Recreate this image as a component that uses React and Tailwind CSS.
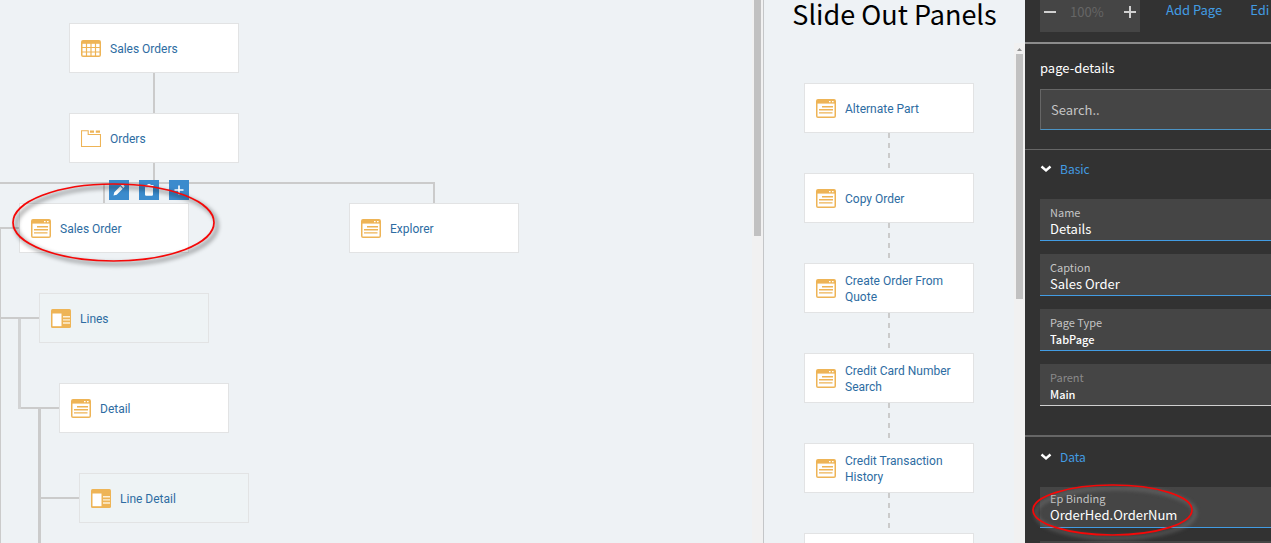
import React, { useState } from 'react';

const AMBER = '#eeb456';

const WindowIcon = () => (
  <svg width="20" height="19" viewBox="0 0 20 19" fill="none" className="shrink-0">
    <rect x="0.75" y="0.75" width="18.5" height="17.5" rx="1.25" fill="#fff" stroke={AMBER} strokeWidth="1.5" />
    <path d="M1 1h18v3.6H1z" fill={AMBER} />
    <path d="M13 2h1.6v1.2H13zM16 2h1.6v1.2H16z" fill="#fff" />
    <path d="M6 7.7h11M3 10.8h14M3 13.9h13.5" stroke={AMBER} strokeWidth="1.4" />
  </svg>
);

const SplitIcon = () => (
  <svg width="20" height="19" viewBox="0 0 20 19" fill="none" className="shrink-0">
    <rect width="20" height="19" rx="1.5" fill={AMBER} />
    <path d="M1.5 4.5h9v12.7h-9z" fill="#fff" />
    <path d="M12 7.8h7M12 10.9h7M12 14h7" stroke="#fdf0d6" strokeWidth="1.4" />
  </svg>
);

const GridIcon = () => (
  <svg width="20" height="17" viewBox="0 0 20 17" fill="none" className="shrink-0">
    <rect x="0.75" y="0.75" width="18.5" height="15.5" rx="1.25" fill="#fff" stroke={AMBER} strokeWidth="1.5" />
    <path d="M1 1h18v2.8H1z" fill={AMBER} />
    <path d="M5.5 3v13M10 3v13M14.5 3v13M1 7.5h18M1 12h18" stroke={AMBER} strokeWidth="1.2" />
  </svg>
);

const TabsIcon = () => (
  <svg width="20" height="17" viewBox="0 0 20 17" fill="none" className="shrink-0">
    <path d="M0.5 16.5V0.8h6.7v3.7h12.3v12z" stroke={AMBER} strokeWidth="1.1" />
    <path d="M9 0.5h4v2.2H9zM14.8 0.5h4.2v2.2h-4.2z" fill={AMBER} />
  </svg>
);

const icons = { window: WindowIcon, split: SplitIcon, grid: GridIcon, tabs: TabsIcon };

const nodes = [
  { label: 'Sales Orders', icon: 'grid', x: 69, y: 23 },
  { label: 'Orders', icon: 'tabs', x: 69, y: 113 },
  { label: 'Sales Order', icon: 'window', x: 19, y: 203 },
  { label: 'Explorer', icon: 'window', x: 349, y: 203 },
  { label: 'Lines', icon: 'split', x: 39, y: 293, muted: true },
  { label: 'Detail', icon: 'window', x: 59, y: 383 },
  { label: 'Line Detail', icon: 'split', x: 79, y: 473, muted: true },
];

// The last card is still unnamed
const slideOuts = [
  'Alternate Part',
  'Copy Order',
  'Create Order From Quote',
  'Credit Card Number Search',
  'Credit Transaction History',
  '',
];

const Card = ({ label, icon = 'window', muted }) => {
  const Icon = icons[icon];
  return (
    <button
      className={`flex h-[50px] w-[170px] shrink-0 items-center gap-[9px] border border-[#e2e3e4] pl-[11px] pr-3 text-left text-xs leading-4 text-[#2d6ca2] ${
        muted ? 'bg-[#eef3f5]' : 'bg-white'
      }`}
    >
      <Icon />
      <span className="pt-0.5">{label}</span>
    </button>
  );
};

// Red marker ring with a soft shadow
const Ring = ({ width, height, shadow }) => (
  <svg width={width + 20} height={height + 20} fill="none" className="overflow-visible">
    <ellipse
      cx={width / 2 + 3}
      cy={height / 2 + 3}
      rx={width / 2 - 1}
      ry={height / 2 - 1}
      stroke={shadow}
      strokeWidth="3"
      style={{ filter: 'blur(2px)' }}
    />
    <ellipse cx={width / 2} cy={height / 2} rx={width / 2 - 1} ry={height / 2 - 1} stroke="#f50808" strokeWidth="1.7" />
  </svg>
);

const Canvas = () => (
  <main className="relative min-w-0 flex-1 overflow-hidden bg-[#eef2f5] font-[Roboto,sans-serif]">
    <svg className="absolute inset-0 h-full w-full" fill="none" stroke="#cbcbcb" strokeWidth="2">
      <path d="M154 73v40M154 163v19M0 183h434v20M104 184v19" />
      <path d="M0 228h19M0 318h39M20 408h39M40 498h39" />
      <path d="M0.5 227v900" strokeWidth="1" />
      <path d="M19.5 319v90" stroke="#d2d3d4" strokeWidth="3" />
      <path d="M39.5 409v900" strokeWidth="3" />
    </svg>

    {nodes.map((node) => (
      <div key={node.label} className="absolute" style={{ left: node.x, top: node.y }}>
        <Card {...node} />
      </div>
    ))}

    <div className="absolute left-[109px] top-[180px] flex gap-2.5">
      <button aria-label="Edit" className="flex size-5 items-center justify-center bg-[#3b8bcd]">
        <svg width="12" height="12" viewBox="0 0 12 12" fill="#fff">
          <path d="M0.5 11.5l0.8-3.2 6-6 2.4 2.4-6 6zM8 1.6l1-1q.5-.4 1 0l1.4 1.4q.4.5 0 1l-1 1z" />
        </svg>
      </button>
      <button aria-label="Delete" className="flex size-5 items-center justify-center bg-[#3b8bcd]">
        <svg width="10" height="12" viewBox="0 0 10 12" fill="#fff">
          <path d="M0.5 1h2.7l.7-1h2.2l.7 1h2.7v1.2h-9zM1 3.2h8v7.3q0 1.2-1.2 1.2H2.2Q1 11.7 1 10.5z" />
        </svg>
      </button>
      <button aria-label="Add" className="flex size-5 items-center justify-center bg-[#3b8bcd]">
        <svg width="10" height="10" viewBox="0 0 10 10" stroke="#fff" strokeWidth="1.6">
          <path d="M5 0.5v9M0.5 5h9" />
        </svg>
      </button>
    </div>

    <div className="pointer-events-none absolute left-3 top-[183px]">
      <Ring width={203} height={79} shadow="#00000066" />
    </div>
  </main>
);

const SlideOutPanels = () => (
  <section className="flex w-[262px] shrink-0 flex-col border-l border-[#c4c6c8] bg-[#eef2f5]">
    <h2 className="h-[43px] shrink-0 text-center font-['Noto_Sans_CJK_SC',sans-serif] text-[27px] leading-7 text-black">
      Slide Out Panels
    </h2>
    <div className="flex min-h-0 flex-1">
      <div className="flex min-w-0 flex-1 flex-col items-center overflow-hidden pt-10 font-[Roboto,sans-serif]">
        {slideOuts.map((label) => (
          <React.Fragment key={label}>
            <Card label={label} />
            <svg width="2" height="40" className="shrink-0">
              <path d="M1 0v40" stroke="#cbcbcb" strokeWidth="2" strokeDasharray="5 5" />
            </svg>
          </React.Fragment>
        ))}
      </div>
      <div className="flex w-[11px] shrink-0 flex-col items-center bg-[#f1f1f1]">
        <svg width="5" height="11" viewBox="0 0 5 11" className="shrink-0" fill="#8f8f8f">
          <path d="M0 8l2.5-3 2.5 3z" />
        </svg>
        <div className="h-[49%] w-[7px] bg-[#c1c1c1]" />
      </div>
    </div>
  </section>
);

const Field = ({ id, label, value, kind = 'text', disabled, compact }) => {
  const [current, setCurrent] = useState(value);
  return (
    <div
      className={`flex shrink-0 flex-col border-b bg-[#454545] pl-2.5 ${compact ? 'h-[41px] pt-[3px]' : 'h-[42px] pt-[5px]'} ${
        disabled ? 'border-[#d0d0d0]' : 'border-[#429ce3]'
      }`}
    >
      <label htmlFor={id} className={`text-[11px] leading-4 ${disabled ? 'text-[#8a8a8a]' : 'text-[#c4c4c4]'}`}>
        {label}
      </label>
      {kind === 'select' ? (
        <select
          id={id}
          value={current}
          disabled={disabled}
          onChange={(e) => setCurrent(e.target.value)}
          className="h-[18px] w-full appearance-none bg-transparent text-[11px] font-medium leading-[18px] text-white opacity-100 outline-none"
        >
          <option>{value}</option>
        </select>
      ) : (
        <input
          id={id}
          value={current}
          onChange={(e) => setCurrent(e.target.value)}
          className="h-[18px] w-full bg-transparent text-[13px] leading-[18px] text-white outline-none"
        />
      )}
    </div>
  );
};

const SectionToggle = ({ title }) => (
  <button className="flex h-9 shrink-0 items-center gap-2 pt-0.5 text-left text-[12px] leading-4 text-[#429ce3]">
    <svg width="12" height="8" viewBox="0 0 12 8" fill="none" stroke="#fff" strokeWidth="2.4">
      <path d="M1.5 1.5l4.5 4 4.5-4" />
    </svg>
    {title}
  </button>
);

const Properties = () => (
  <aside className="relative flex w-[246px] shrink-0 flex-col overflow-hidden bg-[#323232] font-['Noto_Sans_CJK_SC',sans-serif]">
    <div className="flex h-11 shrink-0 items-start border-b-2 border-[#8c8c8c] pl-[15px]">
      <div className="flex h-8 w-[100px] shrink-0 items-center gap-3.5 bg-[#454545] pl-1 pb-2">
        <button aria-label="Zoom out">
          <svg width="12" height="12" stroke="#d0d0d0" strokeWidth="2">
            <path d="M0 6h12" />
          </svg>
        </button>
        <span className="text-[13px] leading-4 text-[#666]">100%</span>
        <button aria-label="Zoom in" className="ml-auto mr-1">
          <svg width="12" height="12" stroke="#d0d0d0" strokeWidth="2">
            <path d="M0 6h12M6 0v12" />
          </svg>
        </button>
      </div>
      <a href="#add-page" className="ml-[26px] shrink-0 text-[13px] leading-5 text-[#429ce3]">
        Add Page
      </a>
      <a href="#edit" className="ml-7 shrink-0 text-[13px] leading-5 text-[#429ce3]">
        Edi
      </a>
    </div>

    <div className="flex shrink-0 flex-col pb-[19px] pl-[15px] pt-3.5">
      <h3 className="text-[13px] leading-5 text-white">page-details</h3>
      <input
        aria-label="Search"
        placeholder="Search.."
        className="mt-[11px] h-[41px] border border-r-0 border-[#666] border-b-[#4b93c4] bg-[#454545] pl-2.5 text-[13px] leading-5 text-white outline-none placeholder:text-[#c4c4c4]"
      />
    </div>

    <div className="flex shrink-0 flex-col gap-[13px] border-t border-[#666] pb-[29px] pl-[15px]">
      <SectionToggle title="Basic" />
      <Field id="name" label="Name" value="Details" />
      <Field id="caption" label="Caption" value="Sales Order" />
      <Field id="page-type" label="Page Type" value="TabPage" kind="select" />
      <Field id="parent" label="Parent" value="Main" kind="select" disabled />
    </div>

    <div className="flex shrink-0 flex-col gap-[13px] border-t-2 border-[#666] pl-[15px] pt-px">
      <SectionToggle title="Data" />
      <Field id="ep-binding" label="Ep Binding" value="OrderHed.OrderNum" compact />
      <div className="h-[42px] bg-[#454545]" />
    </div>

    <div className="pointer-events-none absolute left-[7px] top-[484px]">
      <Ring width={161} height={52} shadow="#8a8a8a88" />
    </div>
  </aside>
);

export default function App() {
  return (
    <div className="flex h-screen overflow-hidden">
      <Canvas />
      <div className="flex w-[11px] shrink-0 justify-center bg-[#f1f1f1]">
        <div className="h-[236px] w-[7px] bg-[#c1c1c1]" />
      </div>
      <SlideOutPanels />
      <Properties />
    </div>
  );
}
